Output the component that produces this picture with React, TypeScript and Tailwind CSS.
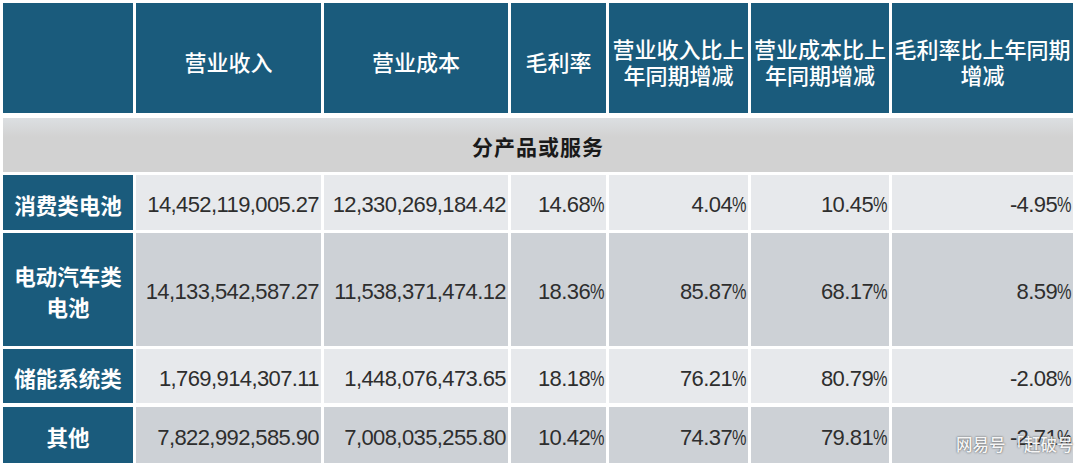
import React from "react";

const GRID = "grid grid-cols-[130px_185px_184px_95px_139px_138px_181px] gap-x-[3px]";
const CJK = "font-['Noto_Sans_CJK_SC','Noto_Sans',sans-serif]";
const NUM = "font-['Liberation_Sans','Noto_Sans_CJK_SC',sans-serif]";

const headers: string[][] = [
  [],
  ["营业收入"],
  ["营业成本"],
  ["毛利率"],
  ["营业收入比上", "年同期增减"],
  ["营业成本比上", "年同期增减"],
  ["毛利率比上年同期", "增减"],
];

type Row = { label: string[]; values: string[]; dark: boolean; h: string; mt: string };

const rows: Row[] = [
  {
    label: ["消费类电池"],
    values: ["14,452,119,005.27", "12,330,269,184.42", "14.68%", "4.04%", "10.45%", "-4.95%"],
    dark: false,
    h: "h-[55px]",
    mt: "mt-[3px]",
  },
  {
    label: ["电动汽车类", "电池"],
    values: ["14,133,542,587.27", "11,538,371,474.12", "18.36%", "85.87%", "68.17%", "8.59%"],
    dark: true,
    h: "h-[113px]",
    mt: "mt-[3px]",
  },
  {
    label: ["储能系统类"],
    values: ["1,769,914,307.11", "1,448,076,473.65", "18.18%", "76.21%", "80.79%", "-2.08%"],
    dark: false,
    h: "h-[54px]",
    mt: "mt-[3px]",
  },
  {
    label: ["其他"],
    values: ["7,822,992,585.90", "7,008,035,255.80", "10.42%", "74.37%", "79.81%", "-2.71%"],
    dark: true,
    h: "h-[56px]",
    mt: "mt-[4px]",
  },
];

function Value({ v }: { v: string }) {
  if (v.endsWith("%")) {
    return (
      <span>
        {v.slice(0, -1)}
        <span className="inline-block origin-left scale-x-[0.74] -mr-[5px]">%</span>
      </span>
    );
  }
  return <span>{v}</span>;
}

export default function App() {
  return (
    <div className="relative w-[1080px] h-[468px] overflow-hidden bg-white pt-[3px] pl-[3px]">
      {/* Header */}
      <div className={`${GRID} h-[110px]`}>
        {headers.map((lines, i) => (
          <div
            key={i}
            className={`bg-[#1a5b7c] flex flex-col items-center justify-center pt-[5px] text-center text-white text-[22px] leading-[26px] font-medium ${CJK}`}
          >
            {lines.map((l, j) => (
              <span key={j} className="block">
                {l}
              </span>
            ))}
          </div>
        ))}
      </div>

      {/* Section row */}
      <div className="mt-[5px] w-[1070px] h-[54px] bg-[linear-gradient(#dcdfe2,#d2d2d2_35%,#d2d2d2)] flex items-center justify-center pt-[3px]">
        <span className={`text-[21px] font-bold text-[#1a1a1a] tracking-[1px] ${CJK}`}>分产品或服务</span>
      </div>

      {/* Data rows */}
      {rows.map((r, i) => (
        <div key={i} className={`${GRID} ${r.h} ${r.mt}`}>
          <div
            className={`bg-[#1a5b7c] flex flex-col items-center justify-center pt-[3px] text-white text-[21.5px] leading-[31px] font-bold ${CJK}`}
          >
            {r.label.map((l, j) => (
              <span key={j}>{l}</span>
            ))}
          </div>
          {r.values.map((v, j) => (
            <div
              key={j}
              className={`${r.dark ? "bg-[#cdd1d6]" : "bg-[#e7e9ec]"} flex items-center justify-end pr-[2px] pt-[4px] text-[22px] tracking-[-0.6px] text-[#2e2e2e] ${NUM}`}
            >
              <Value v={v} />
            </div>
          ))}
        </div>
      ))}

      {/* Watermark */}
      <div
        className={`absolute left-[956px] top-[434px] text-[16.5px] leading-[20px] font-medium text-white/95 [text-shadow:0_0_2px_rgba(50,50,50,0.9)] whitespace-nowrap ${CJK}`}
      >
        网易号<span className="ml-[2px]">「赶破号</span>
      </div>
    </div>
  );
}
